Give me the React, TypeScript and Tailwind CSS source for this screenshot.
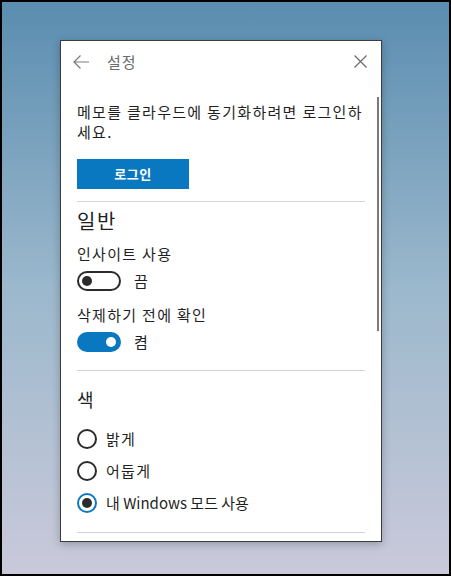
const font = { fontFamily: '"Noto Sans CJK KR", "Noto Sans", sans-serif' };

const Toggle = ({ on }: { on: boolean }) => (
  <div
    className={
      on
        ? "w-[44px] h-[20px] rounded-full bg-[#0a78c1] flex items-center justify-end pr-[5px]"
        : "w-[44px] h-[20px] rounded-full border-2 border-[#2b2b2b] flex items-center pl-[3px]"
    }
  >
    <div className={on ? "w-[10px] h-[10px] rounded-full bg-white" : "w-[10px] h-[10px] rounded-full bg-[#2b2b2b]"} />
  </div>
);

const Radio = ({ checked, label, wide }: { checked?: boolean; label: string; wide?: boolean }) => (
  <div className="flex items-center h-[20px]">
    <div
      className={
        checked
          ? "w-[20px] h-[20px] rounded-full border-2 border-[#0a78c1] flex items-center justify-center"
          : "w-[20px] h-[20px] rounded-full border-2 border-[#2b2b2b]"
      }
    >
      {checked && <div className="w-[10px] h-[10px] rounded-full bg-[#2b2b2b]" />}
    </div>
    <span className={wide ? "ml-[9px] text-[15px] leading-[20px] text-[#1f1f1f] tracking-[1.3px]" : "ml-[9px] text-[15px] leading-[20px] text-[#1f1f1f]"}>
      {label}
    </span>
  </div>
);

export default function App() {
  return (
    <div
      className="w-[451px] h-[576px] border-2 border-black bg-gradient-to-b from-[#5a8db0] via-[#9bb8cc] to-[#c9c9da] pl-[58px] pt-[38px]"
      style={font}
    >
      <div className="relative w-[322px] h-[502px] bg-white border border-[#3c3c3c] shadow-[0_2px_8px_rgba(0,0,0,0.25)] flex flex-col">
        {/* header */}
        <div className="h-[41px] flex items-center pl-[12px] pr-[14px]">
          <svg width="16" height="14" viewBox="0 0 16 14" fill="none" stroke="#7a7a7a" strokeWidth="1.2">
            <path d="M1 7 H16 M7.5 0.5 L1 7 L7.5 13.5" />
          </svg>
          <span className="ml-[18px] text-[15px] text-[#6b6b6b] leading-[20px] tracking-[1px]">설정</span>
          <svg className="ml-auto" width="13" height="13" viewBox="0 0 13 13" fill="none" stroke="#6b6b6b" strokeWidth="1.2">
            <path d="M0.5 0.5 L12.5 12.5 M12.5 0.5 L0.5 12.5" />
          </svg>
        </div>

        {/* scroll indicator */}
        <div className="absolute right-[2px] top-[56px] w-[2px] h-[234px] bg-[#7a7a7a]" />

        <div className="pl-[16px] w-[304px] flex flex-col text-[#1f1f1f]">
          <p className="mt-[20px] text-[15px] leading-[20px] tracking-[1.3px]">
            메모를 클라우드에 동기화하려면 로그인하
            <br />
            세요.
          </p>
          <button className="mt-[17px] w-[112px] h-[30px] bg-[#0a78c1] text-white text-[13px] font-bold tracking-[0.5px]">
            로그인
          </button>
          <div className="mt-[12px] h-px bg-[#d4d4d4]" />

          <div className="mt-[6px] text-[20px] leading-[26px] tracking-[1.5px]">일반</div>
          <div className="mt-[10px] text-[15px] leading-[20px] tracking-[1.3px]">인사이트 사용</div>
          <div className="mt-[7px] flex items-center">
            <Toggle on={false} />
            <span className="ml-[13px] text-[15px] leading-[20px]">끔</span>
          </div>
          <div className="mt-[14px] text-[15px] leading-[20px] tracking-[1.3px]">삭제하기 전에 확인</div>
          <div className="mt-[7px] flex items-center">
            <Toggle on={true} />
            <span className="ml-[13px] text-[15px] leading-[20px]">켬</span>
          </div>
          <div className="mt-[18px] h-px bg-[#d4d4d4]" />

          <div className="mt-[15px] text-[18px] leading-[26px]">색</div>
          <div className="mt-[17px]">
            <Radio label="밝게" wide />
          </div>
          <div className="mt-[12px]">
            <Radio label="어둡게" wide />
          </div>
          <div className="mt-[12px]">
            <Radio checked label="내 Windows 모드 사용" />
          </div>
          <div className="mt-[19px] h-px bg-[#d4d4d4]" />
        </div>
      </div>
    </div>
  );
}
